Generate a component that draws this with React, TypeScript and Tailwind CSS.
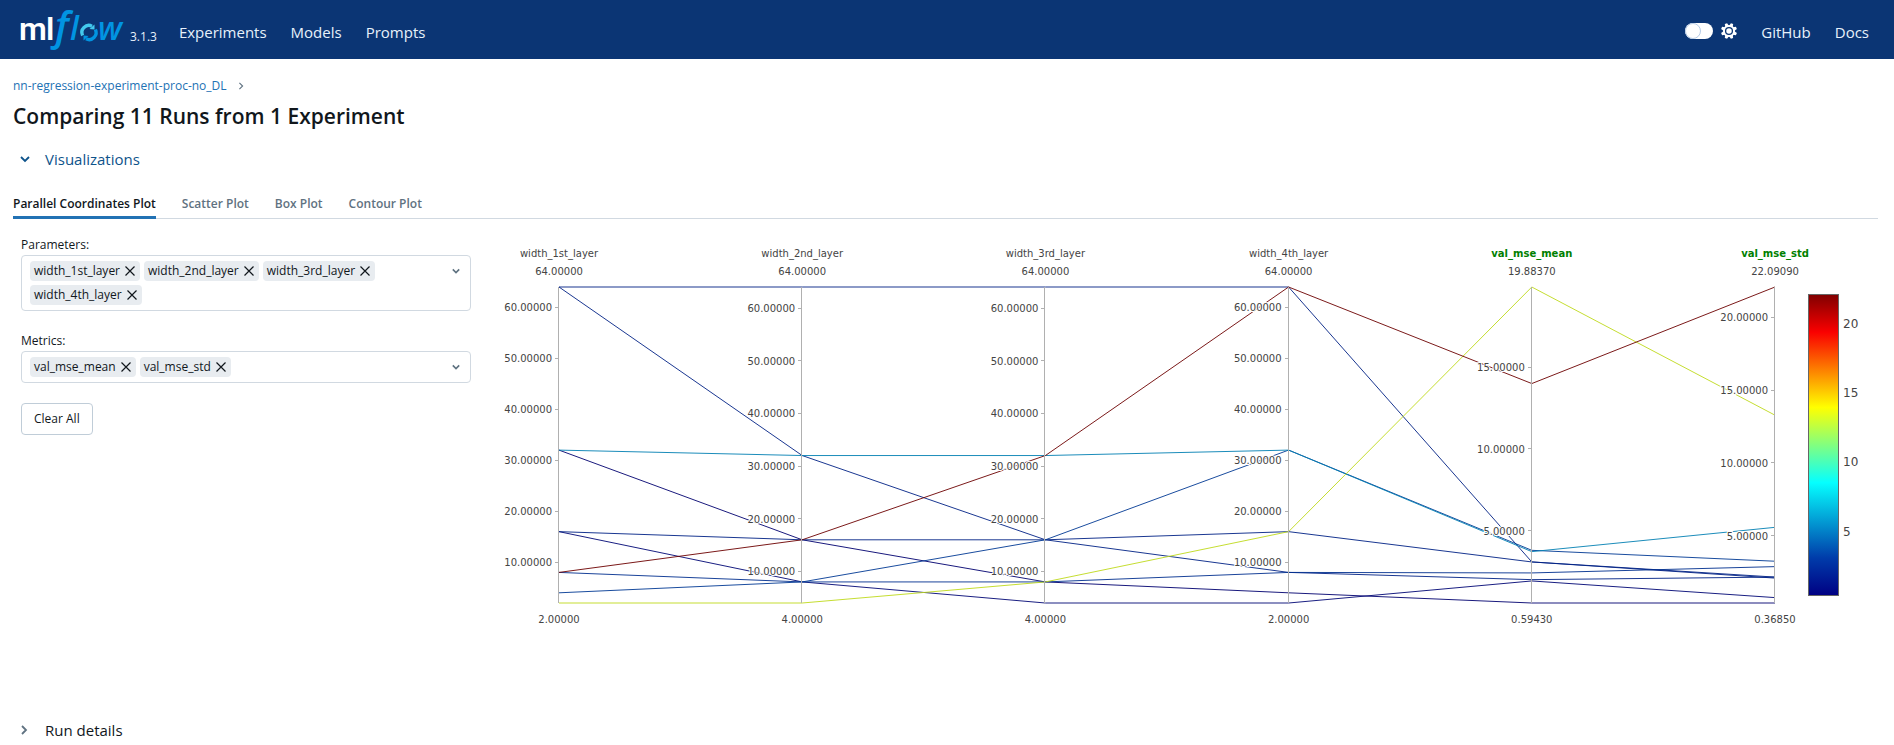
import React from 'react';

type Axis = { label: string; min: number; max: number; ticks: number[]; metric?: boolean };

const AXES: Axis[] = [
  { label: 'width_1st_layer', min: 2, max: 64, ticks: [10, 20, 30, 40, 50, 60] },
  { label: 'width_2nd_layer', min: 4, max: 64, ticks: [10, 20, 30, 40, 50, 60] },
  { label: 'width_3rd_layer', min: 4, max: 64, ticks: [10, 20, 30, 40, 50, 60] },
  { label: 'width_4th_layer', min: 2, max: 64, ticks: [10, 20, 30, 40, 50, 60] },
  { label: 'val_mse_mean', min: 0.5943, max: 19.8837, ticks: [5, 10, 15], metric: true },
  { label: 'val_mse_std', min: 0.3685, max: 22.0909, ticks: [5, 10, 15, 20], metric: true },
];

const RUNS: number[][] = [
  [32, 16, 8, 4, 0.5943, 0.3685],
  [16, 8, 4, 2, 1.94, 0.74],
  [16, 16, 16, 16, 3.1, 2.15],
  [64, 64, 64, 64, 3.1, 2.08],
  [64, 32, 16, 8, 2.02, 2.15],
  [8, 8, 8, 8, 2.43, 2.87],
  [4, 8, 16, 32, 3.81, 3.24],
  [32, 32, 32, 32, 3.73, 5.57],
  [2, 4, 8, 16, 19.8837, 13.28],
  [8, 16, 32, 64, 13.99, 22.0909],
];

const JET: [number, number[]][] = [
  [0, [0, 0, 131]],
  [0.125, [0, 60, 170]],
  [0.375, [5, 255, 255]],
  [0.625, [255, 255, 0]],
  [0.875, [250, 0, 0]],
  [1, [128, 0, 0]],
];

const X0 = 74;
const STEP = 243.2;
const TOP = 55;
const BOTTOM = 371;

function jet(t: number, shade = 1): string {
  for (let i = 1; i < JET.length; i++) {
    const [t1, c1] = JET[i];
    const [t0, c0] = JET[i - 1];
    if (t <= t1) {
      const k = (t - t0) / (t1 - t0);
      return `rgb(${c0.map((c, j) => Math.round((c + (c1[j] - c) * k) * shade)).join(',')})`;
    }
  }
  return 'rgb(128,0,0)';
}

const axisX = (i: number) => X0 + i * STEP;
const axisY = (i: number, v: number) =>
  BOTTOM - ((v - AXES[i].min) / (AXES[i].max - AXES[i].min)) * (BOTTOM - TOP);

function ParallelPlot() {
  const last = AXES[AXES.length - 1];
  return (
    <svg viewBox="0 0 1393 420" className="block w-full font-['DejaVu_Sans',sans-serif]" role="img" aria-label="Parallel coordinates plot">
      <defs>
        <linearGradient id="jet" x1="0" y1="1" x2="0" y2="0">
          {JET.map(([t]) => (
            <stop key={t} offset={t} stopColor={jet(t)} />
          ))}
        </linearGradient>
      </defs>
      {RUNS.map((run, r) => (
        <polyline
          key={r}
          points={run.map((v, i) => `${axisX(i)},${axisY(i, v)}`).join(' ')}
          fill="none"
          stroke={jet((run[5] - last.min) / (last.max - last.min), 0.85)}
          strokeOpacity={0.9}
        />
      ))}
      {AXES.map((axis, i) => (
        <g key={axis.label} fill="#444" fontSize="10">
          <path
            d={`M${Math.round(axisX(i)) - 0.5} ${TOP}V${BOTTOM}`}
            stroke="#b0b0b0"
            shapeRendering="crispEdges"
          />
          {axis.ticks.map((t) => (
            <g key={t}>
              <path d={`M${axisX(i) - 4} ${axisY(i, t)}h4`} stroke="#b0b0b0" shapeRendering="crispEdges" />
              <text x={axisX(i) - 7} y={axisY(i, t) + 4} textAnchor="end" stroke="#fff" strokeWidth="2" paintOrder="stroke">
                {t.toFixed(5)}
              </text>
            </g>
          ))}
          <text
            x={axisX(i)}
            y={TOP - 30}
            textAnchor="middle"
            fill={axis.metric ? 'green' : '#444'}
            fontWeight={axis.metric ? 700 : 400}
          >
            {axis.label}
          </text>
          <text x={axisX(i)} y={TOP - 12} textAnchor="middle">
            {axis.max.toFixed(5)}
          </text>
          <text x={axisX(i)} y={BOTTOM + 20} textAnchor="middle">
            {axis.min.toFixed(5)}
          </text>
        </g>
      ))}
      <rect x="1323.5" y="62.5" width="30" height="301" fill="url(#jet)" stroke="#666" />
      {[5, 10, 15, 20].map((t) => (
        <text key={t} x="1358" y={367.5 - ((t - last.min) / (last.max - last.min)) * 300} fontSize="12" fill="#444">
          {t}
        </text>
      ))}
    </svg>
  );
}

function Logo() {
  return (
    <svg width="108" height="43" viewBox="0 0 108 43" role="img" aria-label="mlflow" className="overflow-visible">
      <g className="font-[Roboto,sans-serif]" fill="#fff" fontSize="32" fontWeight="600">
        <text x="0" y="32">m</text>
        <text x="27" y="32">l</text>
      </g>
      <g className="font-['Open_Sans',sans-serif]" fill="#0194e2" fontSize="32" fontStyle="italic" fontWeight="600">
        <text x="36" y="32" fontSize="40">f</text>
        <text x="51" y="32">l</text>
        <text x="79" y="32">w</text>
      </g>
      <path d="M63.6 27.5A7 7 0 0 1 73 18.2" fill="none" stroke="#43c9ed" strokeWidth="3.4" />
      <path d="M76.400 21.5A7 7 0 0 1 67 30.800" fill="none" stroke="#0194e2" strokeWidth="3.4" />
      <path d="M75.500 16.5v5l-5-0.500z" fill="#43c9ed" />
      <path d="M64.500 32.500v-5l5 0.500z" fill="#0194e2" />
    </svg>
  );
}

function Chevron({ className }: { className: string }) {
  return (
    <svg viewBox="0 0 10 10" className={className} fill="none" stroke="currentColor" aria-hidden="true">
      <path d="M1 3l4 4 4-4" />
    </svg>
  );
}

function Gear() {
  return (
    <svg width="16" height="16" viewBox="0 0 16 16" aria-hidden="true">
      <g fill="#fff">
        <circle cx="8" cy="8" r="6" />
        {[22.5, 67.5, 112.5, 157.5].map((a) => (
          <path key={a} d="M6.800 0h2.400l1 4v8l-1 4h-2.400l-1-4v-8z" transform={`rotate(${a} 8 8)`} />
        ))}
      </g>
      <circle cx="8" cy="8" r="3.4" fill="none" stroke="#0b3574" strokeWidth="1.3" />
    </svg>
  );
}

function Tag({ label }: { label: string }) {
  return (
    <span className="flex h-5 items-center gap-1 rounded bg-[#e8ecf0] px-1 text-[12px]">
      {label}
      <button type="button" aria-label={`Remove ${label}`} className="flex size-3 items-center justify-center">
        <svg viewBox="0 0 10 10" className="size-2.5" stroke="currentColor" strokeWidth="1.2" aria-hidden="true">
          <path d="M0.5 0.5l9 9M9.5 0.5l-9 9" />
        </svg>
      </button>
    </span>
  );
}

function MultiSelect({ id, label, values }: { id: string; label: string; values: string[] }) {
  return (
    <div className="flex flex-col">
      <span id={id} className="text-[12px] leading-5">{label}</span>
      <div role="group" aria-labelledby={id} className="flex items-start rounded border border-[#d1d9e1] py-[5px] pr-2.5 pl-2">
        <div className="flex w-[380px] flex-wrap gap-1">
          {values.map((v) => (
            <Tag key={v} label={v} />
          ))}
        </div>
        <button type="button" aria-label={`Open ${label}`} className="ml-auto flex h-5 items-center text-[#5f7281]">
          <Chevron className="size-2 stroke-2" />
        </button>
      </div>
    </div>
  );
}

const TABS = ['Parallel Coordinates Plot', 'Scatter Plot', 'Box Plot', 'Contour Plot'];

export default function App() {
  return (
    <div className="bg-white font-['Open_Sans',sans-serif] text-[#11171c]">
      <header className="flex h-[59px] items-center bg-[#0b3574] pr-[25px] pl-[19px] text-[#e7f1fb]">
        <Logo />
        <span className="mt-3.5 ml-[3px] text-[12px]">3.1.3</span>
        <nav className="mt-1.5 ml-[22px] flex gap-6 text-[15px]">
          <a href="#experiments">Experiments</a>
          <a href="#models">Models</a>
          <a href="#prompts">Prompts</a>
        </nav>
        <div className="mt-[3px] ml-auto flex items-center gap-2">
          <button type="button" role="switch" aria-checked="false" aria-label="Dark theme" className="flex h-4 w-7 rounded-full bg-white">
            <span className="size-4 rounded-full border border-[#b6cbe6] bg-white" />
          </button>
          <Gear />
        </div>
        <nav className="mt-1.5 ml-6 flex gap-6 text-[15px]">
          <a href="#github">GitHub</a>
          <a href="#docs">Docs</a>
        </nav>
      </header>
      <main className="pt-[17px] pr-4 pl-[13px]">
        <nav className="flex h-5 items-center gap-2.5 text-[12px] text-[#2272b4]">
          <a href="#experiment">nn-regression-experiment-proc-no_DL</a>
          <Chevron className="size-2 -rotate-90 stroke-[1.4] text-[#5f7281]" />
        </nav>
        <h1 className="mt-1 text-[21px] leading-8 font-semibold">Comparing 11 Runs from 1 Experiment</h1>
        <button type="button" className="mt-[15px] flex h-6 items-center gap-[15px] pl-[7px] text-[15px] text-[#0e538b]">
          <Chevron className="size-2.5 stroke-[1.8]" />
          Visualizations
        </button>
        <div role="tablist" className="mt-5 flex gap-[26px] border-b border-[#d1d9e1] text-[12px] font-semibold">
          {TABS.map((t, i) => (
            <button
              key={t}
              type="button"
              role="tab"
              aria-selected={i === 0}
              className={
                i === 0
                  ? '-mb-px h-7 border-b-[3px] border-[#2272b4]'
                  : 'h-[25px] text-[#5f7281]'
              }
            >
              {t}
            </button>
          ))}
        </div>
        <div className="flex gap-3.5 pt-[13px]">
          <div className="flex w-[458px] shrink-0 flex-col items-stretch gap-5 pt-[3px] pl-2">
            <MultiSelect
              id="parameters"
              label="Parameters:"
              values={['width_1st_layer', 'width_2nd_layer', 'width_3rd_layer', 'width_4th_layer']}
            />
            <MultiSelect id="metrics" label="Metrics:" values={['val_mse_mean', 'val_mse_std']} />
            <button type="button" className="h-8 self-start rounded border border-[#c0cdd8] px-3 text-[12px]">
              Clear All
            </button>
          </div>
          <div className="min-w-0 flex-1">
            <ParallelPlot />
          </div>
        </div>
        <button type="button" className="mt-[66px] flex h-6 items-center gap-4 pl-[6px] text-[15px]">
          <Chevron className="size-2.5 -rotate-90 stroke-[1.8] text-[#5f7281]" />
          Run details
        </button>
      </main>
    </div>
  );
}
